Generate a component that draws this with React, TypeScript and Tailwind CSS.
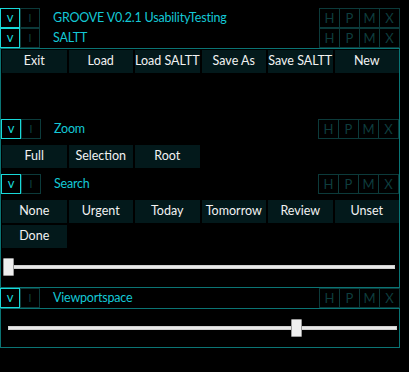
import React from "react";

const font = "font-['Lato','Liberation_Sans',sans-serif]";

function Header({ title }: { title: string }) {
  return (
    <div className="flex h-[20px] items-stretch">
      <div className="flex w-[20px] items-center justify-center border border-[#18d9d9] pb-px text-[13px] leading-none text-[#18d9d9]">
        v
      </div>
      <div className="flex w-[20px] items-center justify-center border border-[#0c3a3a] text-[12px] leading-none text-[#0c3a3a]">
        I
      </div>
      <div className="ml-[13px] flex-1 self-center whitespace-nowrap text-[12.5px] leading-none tracking-[-0.2px] text-[#14c8d6]">
        {title}
      </div>
      <div className="flex">
        {["H", "P", "M", "X"].map((k) => (
          <div
            key={k}
            className="-ml-px flex w-[21px] items-center justify-center border border-[#0c3a3a] text-[13px] leading-none text-[#0e3d3d]"
          >
            {k}
          </div>
        ))}
      </div>
    </div>
  );
}

function Buttons({ labels }: { labels: string[] }) {
  return (
    <div className="grid grid-cols-6 gap-[2px] pl-px">
      {labels.map((l) => (
        <div
          key={l}
          className="flex h-[23px] items-center justify-center whitespace-nowrap bg-[#03191b] text-[12.5px] leading-none text-[#f2f2f2]"
        >
          {l}
        </div>
      ))}
    </div>
  );
}

function Slider({ pos, left, right }: { pos: number; left: number; right: number }) {
  return (
    <div className="relative h-[18px]" style={{ marginLeft: left, marginRight: right }}>
      <div className="absolute inset-x-0 top-[7px] h-[4px] border border-[#cfcfcf] bg-[#e8e8e8]" />
      <div
        className="absolute top-0 h-[18px] w-[11px] rounded-[1px] border border-[#9a9a9a] bg-[#f0f0f0]"
        style={{ left: pos }}
      />
    </div>
  );
}

export default function App() {
  return (
    <div className={`h-[372px] w-[409px] bg-black pt-2 ${font}`}>
      <div className="w-[400px]">
        <Header title="GROOVE V0.2.1 UsabilityTesting" />
        <Header title="SALTT" />
        <div className="h-[240px] border border-[#0b7474]">
          <div className="pt-px">
            <Buttons labels={["Exit", "Load", "Load SALTT", "Save As", "Save SALTT", "New"]} />
          </div>
          <div className="mt-[46px]">
            <Header title="Zoom" />
          </div>
          <div className="mt-[6px]">
            <Buttons labels={["Full", "Selection", "Root"]} />
          </div>
          <div className="mt-[6px]">
            <Header title="Search" />
          </div>
          <div className="mt-[6px] flex flex-col gap-[2px]">
            <Buttons labels={["None", "Urgent", "Today", "Tomorrow", "Review", "Unset"]} />
            <Buttons labels={["Done"]} />
          </div>
          <div className="mt-[10px]">
            <Slider pos={0} left={2} right={4} />
          </div>
        </div>
        <Header title="Viewportspace" />
        <div className="h-[40px] border border-[#0b7474] pt-[10px]">
          <Slider pos={283} left={7} right={2} />
        </div>
      </div>
    </div>
  );
}
